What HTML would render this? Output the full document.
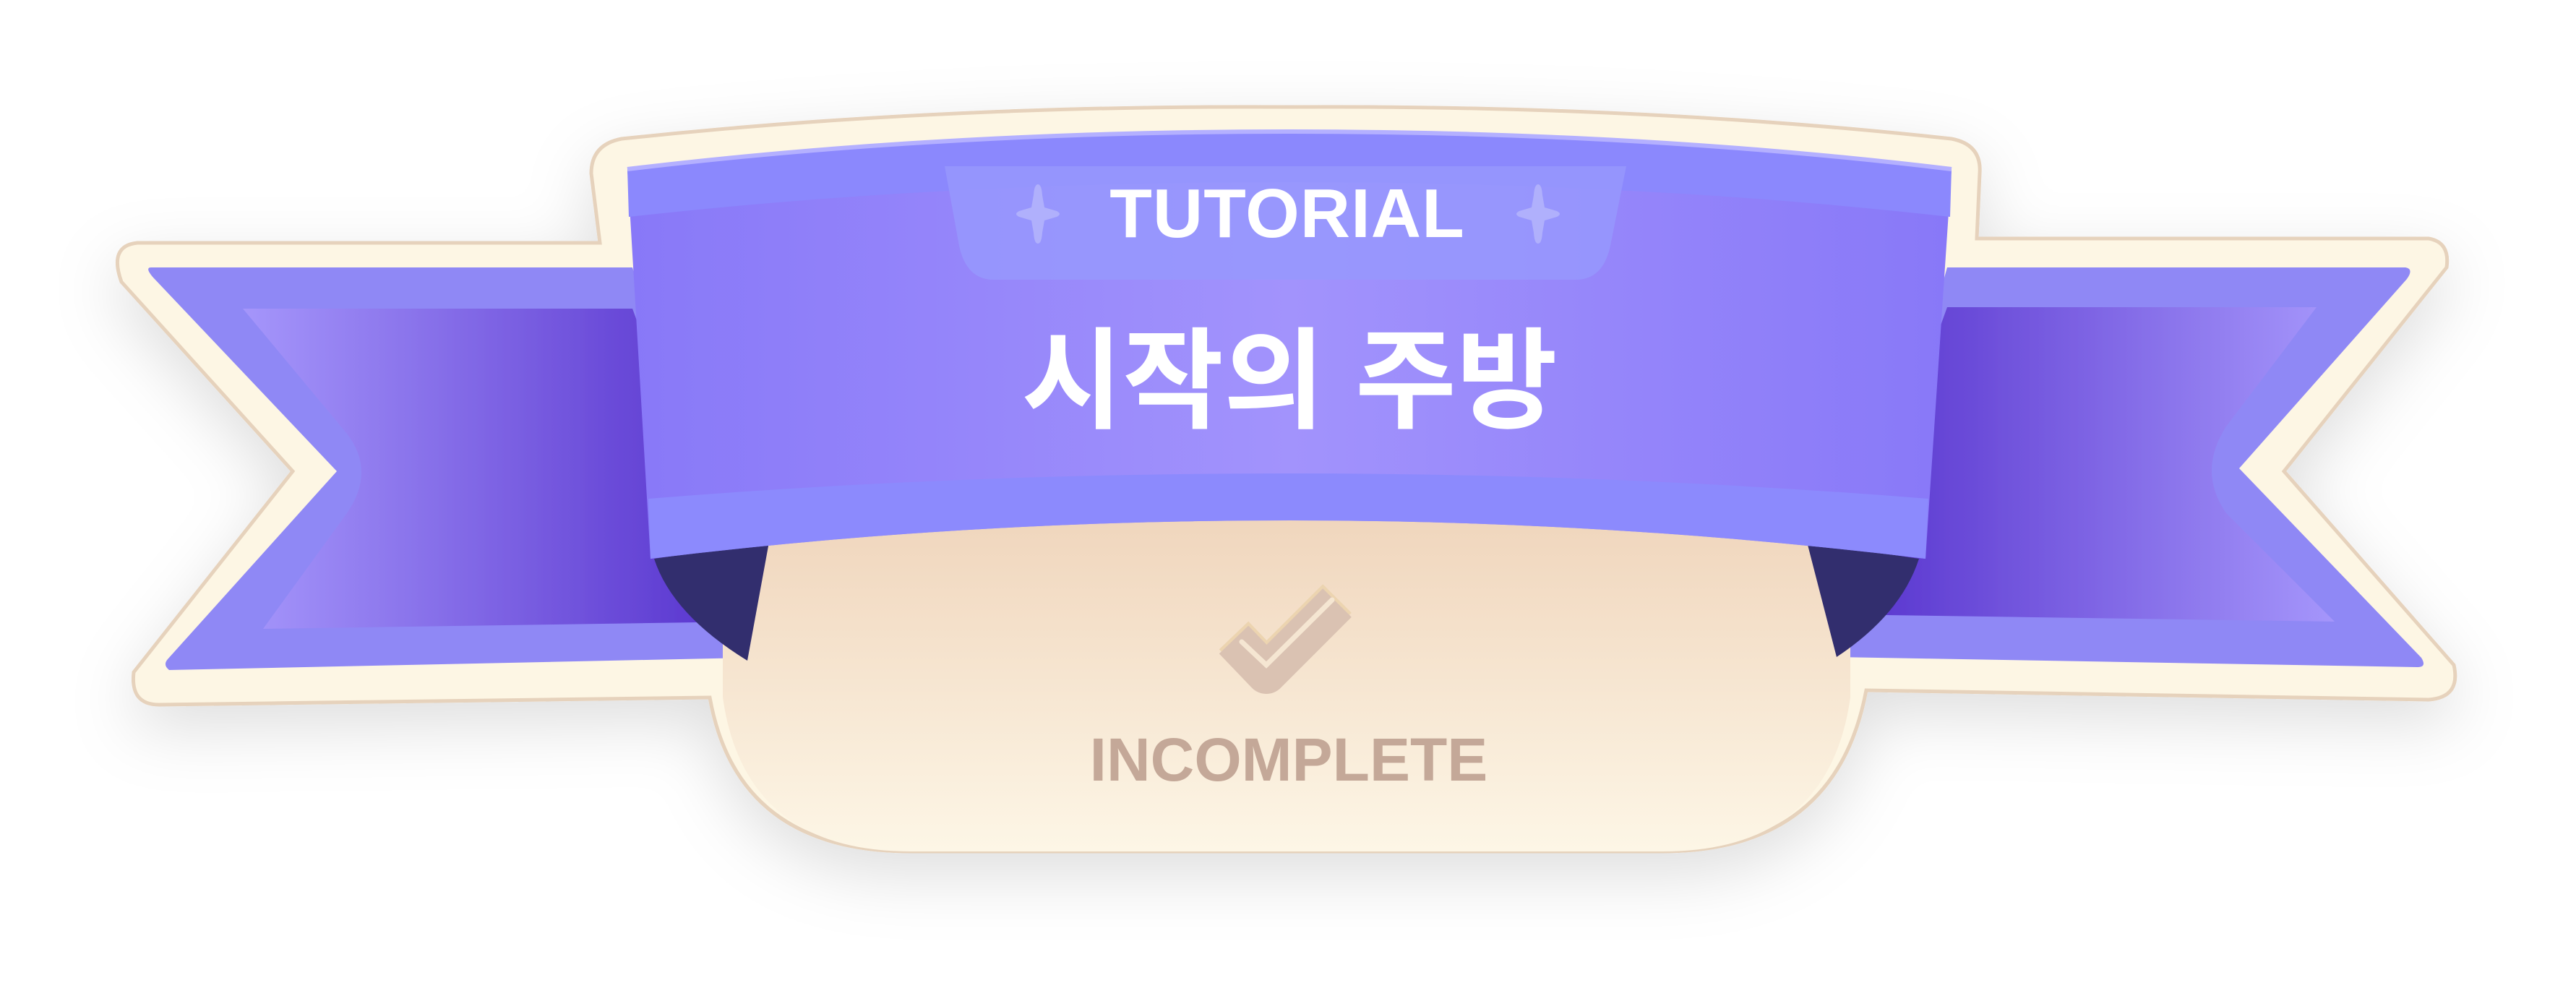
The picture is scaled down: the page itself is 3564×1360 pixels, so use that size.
<!DOCTYPE html>
<html><head><meta charset="utf-8"><style>
html,body{margin:0;padding:0;background:#fff;width:3564px;height:1360px;overflow:hidden}
svg{display:block}
</style></head><body>
<svg width="3564" height="1360" viewBox="0 0 3564 1360" xmlns="http://www.w3.org/2000/svg">
<defs>
<filter id="sh" x="-10%" y="-20%" width="120%" height="150%"><feDropShadow dx="0" dy="30" stdDeviation="45" flood-color="#000" flood-opacity="0.13"/></filter>
<linearGradient id="plate" x1="0" y1="0" x2="0" y2="1"><stop offset="0" stop-color="#f0d6bd"/><stop offset="1" stop-color="#fdf6e6"/></linearGradient>
<linearGradient id="band" x1="0" y1="0" x2="1" y2="0"><stop offset="0" stop-color="#8878f8"/><stop offset="0.5" stop-color="#a293fc"/><stop offset="1" stop-color="#8878f8"/></linearGradient>
<linearGradient id="wl" x1="0" y1="0" x2="1" y2="0"><stop offset="0" stop-color="#a596fb"/><stop offset="1" stop-color="#5530cc"/></linearGradient>
<linearGradient id="wr" x1="1" y1="0" x2="0" y2="0"><stop offset="0" stop-color="#a596fb"/><stop offset="1" stop-color="#5530cc"/></linearGradient>
</defs>
<g filter="url(#sh)">
<path d="M190,336 L830,336 L818,240 Q818,200 860,192 Q1300,145 1784,148 Q2270,145 2700,192 Q2742,200 2739,240 L2735,330 L3360,330 Q3390,335 3385,370 L3160,652 L3395,920 Q3405,965 3360,968 L2582,955 Q2540,1178 2300,1178 L1260,1178 Q1020,1178 982,965 L220,975 Q180,975 185,930 L405,652 L168,390 Q150,340 190,336 Z" fill="#fdf6e4" stroke="#e6d2bc" stroke-width="5"/>
<path d="M209,370 L875,370 L1034,910 L234,927 Q225,920 232,912 L466,652 L212,384 Q200,370 209,370 Z" fill="#8f88f5"/>
<path d="M336,427 L875,427 L1034,860 L364,870 L480,710 Q520,652 480,600 Z" fill="url(#wl)"/>
<path d="M2694,370 L3328,370 Q3340,372 3330,386 L3098,648 L3350,910 Q3358,923 3345,923 L2541,909 Z" fill="#8f88f5"/>
<path d="M2694,425 L3205,425 L3080,590 Q3040,652 3080,710 L3230,860 L2541,850 Z" fill="url(#wr)"/>
<path d="M1000,720 L2560,720 L2560,965 Q2530,1178 2300,1178 L1260,1178 Q1030,1178 1000,965 Z" fill="url(#plate)"/>
<path d="M905,773 L1064,750 L1034,914 Q930,850 905,773 Z" fill="#332d6e"/>
<path d="M2500,750 L2655,773 Q2630,850 2541,909 Z" fill="#332d6e"/>
<path d="M868,234 Q1300,182 1784,182 Q2270,182 2700,234 L2664,773 Q2230,720 1784,720 Q1330,720 900,773 Z" fill="url(#band)"/>
<path d="M868,234 Q1300,182 1784,182 Q2270,182 2700,234 L2698,300 Q2270,252 1784,252 Q1300,252 870,300 Z" fill="#8b88fd"/>
<path d="M897,690 Q1330,655 1784,655 Q2230,655 2668,690 L2664,773 Q2230,720 1784,720 Q1330,720 900,773 Z" fill="#8c8afd"/>
<path d="M868,234 Q1300,182 1784,182 Q2270,182 2700,234" fill="none" stroke="#b4b0ff" stroke-width="6"/>
<path d="M1307,230 L2250,230 L2228,340 Q2218,387 2180,387 L1375,387 Q1337,387 1327,340 Z" fill="#9698fd" opacity="0.85"/>
<g fill="#b0b0fc">
<path d="M1436,255 Q1441,255 1442,270 L1445,287 L1462,292 Q1470,296 1462,300 L1445,305 L1442,322 Q1441,337 1436,337 Q1431,337 1430,322 L1427,305 L1410,300 Q1402,296 1410,292 L1427,287 L1430,270 Q1431,255 1436,255 Z"/>
<path d="M2128,255 Q2133,255 2134,270 L2137,287 L2154,292 Q2162,296 2154,300 L2137,305 L2134,322 Q2133,337 2128,337 Q2123,337 2122,322 L2119,305 L2102,300 Q2094,296 2102,292 L2119,287 L2122,270 Q2123,255 2128,255 Z"/>
</g>
<text x="1781" y="328" text-anchor="middle" font-family="Liberation Sans, sans-serif" font-weight="bold" font-size="96" letter-spacing="1" fill="#fff">TUTORIAL</text>
<text x="1784" y="580" text-anchor="middle" font-family="Liberation Sans, 'Noto Sans CJK KR', sans-serif" font-weight="bold" font-size="152" letter-spacing="0" fill="#fff">시작의 주방</text>
<polyline points="1707,885 1752,932 1850,834" fill="none" stroke="#ecd4b0" stroke-width="56" stroke-linejoin="round" transform="translate(0,-6)"/>
<polyline points="1707,885 1752,932 1850,834" fill="none" stroke="#dac2b2" stroke-width="56" stroke-linejoin="round"/>
<polyline points="1718,888 1752,920 1843,830" fill="none" stroke="#f5e6d2" stroke-width="7" stroke-linecap="round"/>
<text x="1783" y="1080" text-anchor="middle" font-family="Liberation Sans, sans-serif" font-weight="bold" font-size="84" letter-spacing="0" fill="#c4a898">INCOMPLETE</text>
</g>
</svg>
</body></html>
